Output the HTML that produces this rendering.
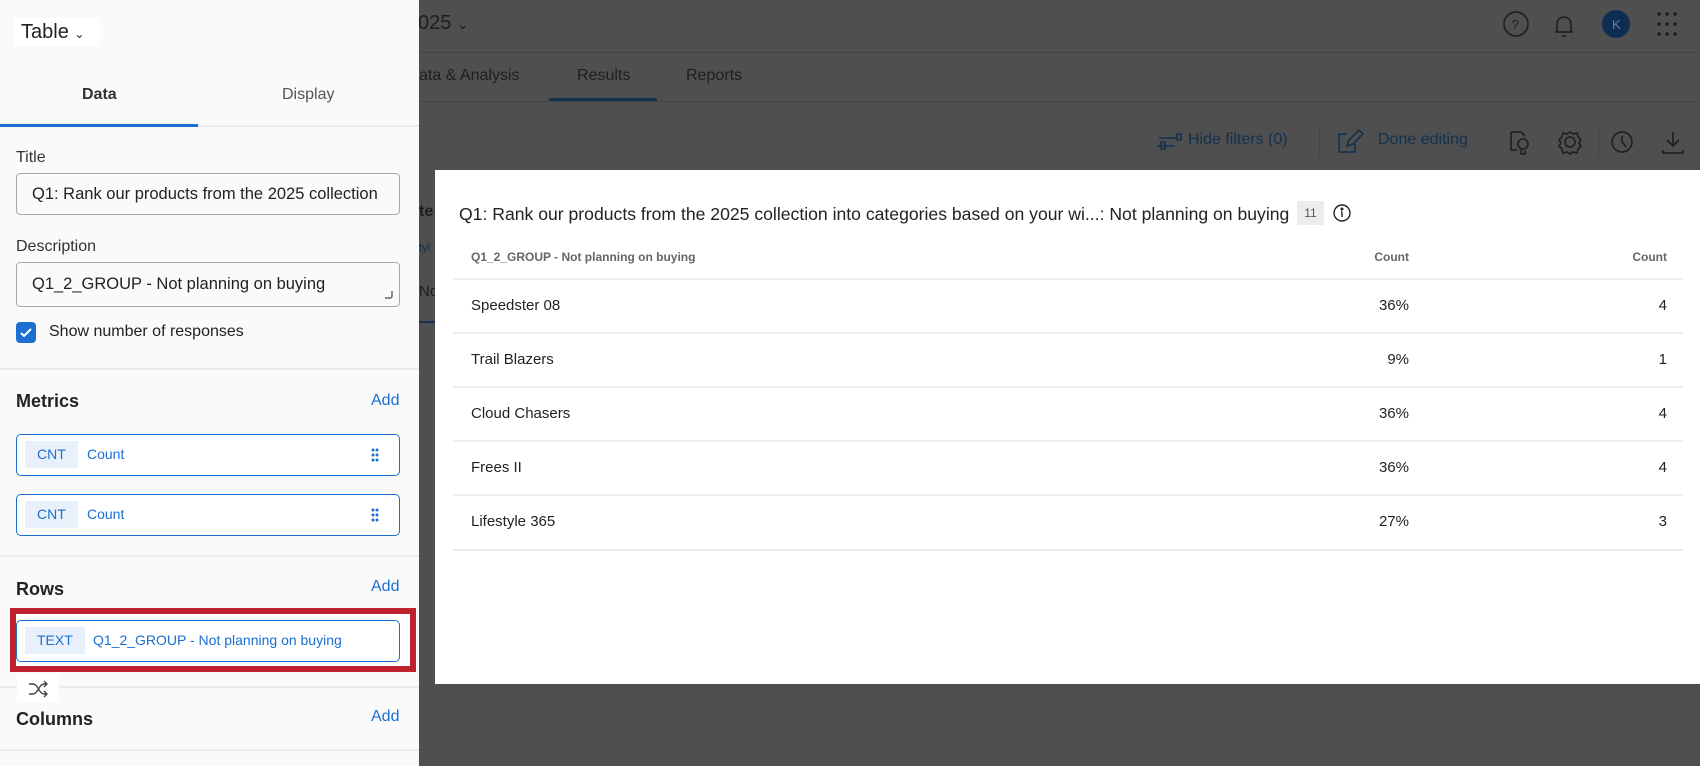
<!DOCTYPE html>
<html><head><meta charset="utf-8"><style>
*{box-sizing:border-box;margin:0;padding:0}
body{width:1700px;height:766px;overflow:hidden;background:#4f4f4f;font-family:"Liberation Sans",sans-serif;position:relative;color:#222}
.a{position:absolute;white-space:nowrap}
.dk{color:#1e1e1e}
.sb{position:absolute;left:0;top:0;width:419px;height:766px;background:#fafafa}
.lbl{font-size:16px;color:#333}
.inp{position:absolute;left:16px;width:384px;border:1px solid #aaa;border-radius:4px;background:#fafafa;font-size:16.5px;color:#222;padding-left:15px;overflow:hidden}
.h{font-size:18px;font-weight:bold;color:#222}
.add{font-size:16px;color:#1a6fd1}
.pill{position:absolute;left:16px;width:384px;height:42px;border:1.5px solid #1a6fd1;border-radius:5px;background:#fff}
.tag{position:absolute;left:8px;top:6px;height:27px;background:#e8f1fb;color:#1a6fd1;font-size:14px;line-height:27px;padding:0 12px}
.pt{position:absolute;top:11px;color:#1a6fd1;font-size:14px}
.hr{position:absolute;left:0;width:419px;height:2px;background:#ececec}
.card{position:absolute;left:435px;top:170px;width:1265px;height:514px;background:#fff}
.row{position:absolute;left:18px;width:1230px;border-bottom:2px solid #ececec;font-size:15px;color:#222}
</style></head><body>
<div class="a dk" style="left:418px;top:12px;font-size:20px">025 <span style="font-size:14px">&#8964;</span></div>
<div style="position:absolute;left:419px;top:52px;width:1281px;height:1px;background:#444"></div>
<div class="a dk" style="left:419px;top:67px;font-size:16px">ata &amp; Analysis</div>
<div class="a dk" style="left:577px;top:67px;font-size:16px">Results</div>
<div class="a dk" style="left:686px;top:67px;font-size:16px">Reports</div>
<div style="position:absolute;left:549px;top:98px;width:108px;height:3px;background:#12314f"></div>
<div style="position:absolute;left:419px;top:101px;width:1281px;height:1px;background:#444"></div>
<svg class="a" style="left:1500px;top:10px" width="200" height="30" fill="none" stroke="#1e1e1e" stroke-width="1.6">
<circle cx="16" cy="14" r="12"/><text x="11.5" y="19" font-size="13" fill="#1e1e1e" stroke="none" font-family="Liberation Sans">?</text>
<path d="M57 22 V14 a7 7 0 0 1 14 0 V22 Z M55 22 H73 M62 26 H66"/>
<circle cx="116" cy="14" r="14" fill="#0d2d52" stroke="none"/><text x="112" y="19" font-size="13" fill="#5f7fa5" stroke="none" font-family="Liberation Sans">K</text>
<g fill="#1e1e1e" stroke="none"><circle cx="159" cy="4" r="1.8"/><circle cx="167" cy="4" r="1.8"/><circle cx="175" cy="4" r="1.8"/><circle cx="159" cy="14" r="1.8"/><circle cx="167" cy="14" r="1.8"/><circle cx="175" cy="14" r="1.8"/><circle cx="159" cy="24" r="1.8"/><circle cx="167" cy="24" r="1.8"/><circle cx="175" cy="24" r="1.8"/></g>
</svg>
<svg class="a" style="left:1155px;top:128px" width="545" height="28" fill="none" stroke="#12314f" stroke-width="1.6">
<path d="M4 10 H22 M2 18 H20 M22 6 v6 h4 v-6z M6 14 v7 h4 v-7z"/>
<path d="M192 6 h-8 v18 h16 v-8 M192 18 l2-6 10-10 4 4-10 10z"/>
<g stroke="#1e1e1e"><path d="M356 4 h10 l4 4 M356 4 v18 h6"/><circle cx="368" cy="16" r="5"/><path d="M366 22 v4 h4 v-4"/>
<circle cx="415" cy="14" r="5"/><path d="M415 4 l3 2 4-1 1 4 3 3-2 3 2 3-3 3-1 4-4-1-3 2-3-2-4 1-1-4-3-3 2-3-2-3 3-3 1-4 4 1z"/>
<circle cx="467" cy="14" r="10"/><path d="M467 8 v6 l4 5"/>
<path d="M518 4 v14 M512 12 l6 6 6-6 M508 22 v3 h20 v-3"/></g>
</svg>
<div class="a" style="left:1188px;top:131px;font-size:16px;color:#12314f">Hide filters (0)</div>
<div style="position:absolute;left:1319px;top:126px;width:1px;height:30px;background:#444"></div>
<div class="a" style="left:1378px;top:131px;font-size:16px;color:#12314f">Done editing</div>
<div style="position:absolute;left:1598px;top:126px;width:1px;height:30px;background:#444"></div>
<div class="a dk" style="left:419px;top:203px;font-size:16px;font-weight:bold">te</div>
<div class="a" style="left:419px;top:242px;font-size:11px;color:#12314f">tyl</div>
<div class="a dk" style="left:419px;top:283px;font-size:15px">No</div>
<div style="position:absolute;left:419px;top:321px;width:16px;height:2px;background:#12314f"></div>

<div class="sb">
<div class="a" style="left:14px;top:18px;height:28px;width:86px;background:#fff"></div>
<div class="a" style="left:21px;top:21px;font-size:20px;color:#222">Table <span style="font-size:12px">&#8964;</span></div>
<div class="a" style="left:82px;top:86px;font-size:16px;font-weight:bold;color:#333">Data</div>
<div class="a" style="left:282px;top:86px;font-size:16px;color:#555">Display</div>
<div style="position:absolute;left:0;top:125px;width:419px;height:2px;background:#ebebeb"></div>
<div style="position:absolute;left:0;top:124px;width:198px;height:3px;background:#1a6fd1"></div>
<div class="a lbl" style="left:16px;top:149px">Title</div>
<div class="inp" style="top:173px;height:42px;line-height:40px">Q1: Rank our products from the 2025 collection into</div>
<div class="a lbl" style="left:16px;top:238px">Description</div>
<div class="inp" style="top:262px;height:45px;line-height:42px">Q1_2_GROUP - Not planning on buying</div>
<svg class="a" style="left:384px;top:290px" width="10" height="10"><path d="M8 1 v5 a2 2 0 0 1-2 2 H1" stroke="#666" stroke-width="1.5" fill="none"/></svg>
<div class="a" style="left:16px;top:322px;width:20px;height:21px;background:#1a6fd1;border-radius:4px"></div>
<svg class="a" style="left:16px;top:322px" width="20" height="21"><path d="M5 11 l3 3 7-7" stroke="#fff" stroke-width="2" fill="none"/></svg>
<div class="a" style="left:49px;top:323px;font-size:16px;color:#222">Show number of responses</div>
<div class="hr" style="top:368px"></div>
<div class="a h" style="left:16px;top:391px">Metrics</div>
<div class="a add" style="left:371px;top:392px">Add</div>
<div class="pill" style="top:434px"><div class="tag">CNT</div><div class="pt" style="left:70px">Count</div><svg class="a" style="left:354px;top:13px" width="8" height="14" fill="#1a6fd1"><circle cx="2" cy="2" r="1.5"/><circle cx="6" cy="2" r="1.5"/><circle cx="2" cy="7" r="1.5"/><circle cx="6" cy="7" r="1.5"/><circle cx="2" cy="12" r="1.5"/><circle cx="6" cy="12" r="1.5"/></svg></div>
<div class="pill" style="top:494px"><div class="tag">CNT</div><div class="pt" style="left:70px">Count</div><svg class="a" style="left:354px;top:13px" width="8" height="14" fill="#1a6fd1"><circle cx="2" cy="2" r="1.5"/><circle cx="6" cy="2" r="1.5"/><circle cx="2" cy="7" r="1.5"/><circle cx="6" cy="7" r="1.5"/><circle cx="2" cy="12" r="1.5"/><circle cx="6" cy="12" r="1.5"/></svg></div>
<div class="hr" style="top:555px"></div>
<div class="a h" style="left:16px;top:579px">Rows</div>
<div class="a add" style="left:371px;top:578px">Add</div>
<div class="a" style="left:10px;top:608px;width:406px;height:64px;border:6px solid #c0212f;background:#fff"></div>
<div class="pill" style="top:620px"><div class="tag">TEXT</div><div class="pt" style="left:76px">Q1_2_GROUP - Not planning on buying</div></div>
<div class="hr" style="top:686px"></div>
<div class="a" style="left:17px;top:674px;width:42px;height:28px;background:#fff"></div>
<svg class="a" style="left:27px;top:680px" width="22" height="18" fill="none" stroke="#444" stroke-width="1.4"><path d="M2 4 h4 c5 0 6 10 11 10 h3 M2 14 h4 c5 0 6-10 11-10 h3 M17 1 l3 3-3 3 M17 11 l3 3-3 3"/></svg>
<div class="a h" style="left:16px;top:709px">Columns</div>
<div class="a add" style="left:371px;top:708px">Add</div>
<div class="hr" style="top:749px"></div>
</div>

<div class="card">
<div class="a" style="left:24px;top:34px;font-size:17.6px;color:#222">Q1: Rank our products from the 2025 collection into categories based on your wi...: Not planning on buying</div>
<div class="a" style="left:862px;top:31px;width:27px;height:24px;background:#ececec;font-size:12px;color:#555;text-align:center;line-height:24px">11</div>
<svg class="a" style="left:897px;top:33px" width="20" height="20" fill="none" stroke="#222" stroke-width="1.4"><circle cx="10" cy="10" r="8"/><path d="M10 9 v5 M9 8.5 h1"/><circle cx="10" cy="6" r="0.8" fill="#222"/></svg>
<div class="row" style="top:52px;height:58px"><span class="a" style="left:18px;top:28px;font-size:12px;font-weight:bold;color:#666">Q1_2_GROUP - Not planning on buying</span><span class="a" style="right:274px;top:28px;font-size:12px;font-weight:bold;color:#666">Count</span><span class="a" style="right:16px;top:28px;font-size:12px;font-weight:bold;color:#666">Count</span></div>
<div class="row" style="top:110px;height:54px"><span class="a" style="left:18px;top:17px">Speedster 08</span><span class="a" style="right:274px;top:17px">36%</span><span class="a" style="right:16px;top:17px">4</span></div>
<div class="row" style="top:164px;height:54px"><span class="a" style="left:18px;top:17px">Trail Blazers</span><span class="a" style="right:274px;top:17px">9%</span><span class="a" style="right:16px;top:17px">1</span></div>
<div class="row" style="top:218px;height:54px"><span class="a" style="left:18px;top:17px">Cloud Chasers</span><span class="a" style="right:274px;top:17px">36%</span><span class="a" style="right:16px;top:17px">4</span></div>
<div class="row" style="top:272px;height:54px"><span class="a" style="left:18px;top:17px">Frees II</span><span class="a" style="right:274px;top:17px">36%</span><span class="a" style="right:16px;top:17px">4</span></div>
<div class="row" style="top:326px;height:55px"><span class="a" style="left:18px;top:17px">Lifestyle 365</span><span class="a" style="right:274px;top:17px">27%</span><span class="a" style="right:16px;top:17px">3</span></div>
</div>
</body></html>
